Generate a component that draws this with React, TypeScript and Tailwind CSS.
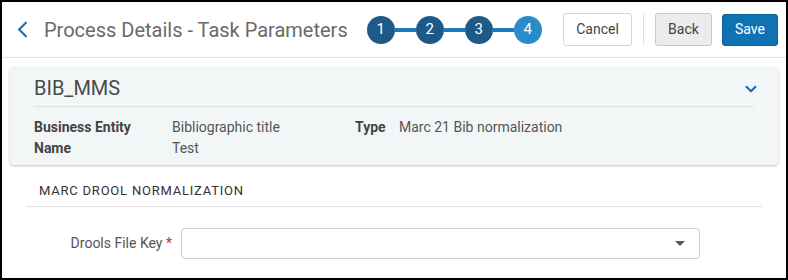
import { ChevronLeft, ChevronDown } from 'lucide-react';

const steps = [1, 2, 3, 4];

function Stepper() {
  return (
    <div className="flex items-center">
      {steps.map((s, i) => (
        <div key={s} className="flex items-center">
          {i > 0 && <div className="w-[21px] h-[4px] bg-[#1a78bb]" />}
          <div
            className={`w-[28px] h-[28px] rounded-full flex items-center justify-center text-white text-[15px] ${
              s === 4 ? 'bg-[#2b8ac8]' : 'bg-[#1d5a88]'
            }`}
          >
            {s}
          </div>
        </div>
      ))}
    </div>
  );
}

export default function App() {
  return (
    <main
      className="w-[788px] h-[280px] border-2 border-black bg-white overflow-hidden text-[#333]"
      style={{ fontFamily: 'Roboto, "Liberation Sans", sans-serif' }}
    >
      {/* header */}
      <header className="h-[56px] flex items-center border-b border-[#e0e0e0] pl-[7px] pr-[8px]">
        <ChevronLeft className="w-[27px] h-[27px] text-[#1a73b8]" strokeWidth={1.9} />
        <h1 className="ml-[8px] text-[20px] text-[#6a6a6a] leading-none">Process Details - Task Parameters</h1>
        <div className="ml-[19px]">
          <Stepper />
        </div>
        <div className="ml-auto flex items-center">
          <button className="h-[33px] w-[69px] border border-[#d4d4d4] rounded-[3px] bg-white text-[14px] text-[#444]">
            Cancel
          </button>
          <div className="w-px h-[33px] bg-[#e3e3e3] mx-[11px]" />
          <button className="h-[33px] w-[57px] border border-[#c9c9c9] rounded-[3px] bg-[#ececec] text-[14px] text-[#444]">
            Back
          </button>
          <button className="ml-[10px] h-[32px] w-[56px] border border-[#0d5f96] rounded-[3px] bg-[#0f72b3] text-[14px] text-white">
            Save
          </button>
        </div>
      </header>

      {/* summary card */}
      <section className="mx-[8px] mt-[9px] h-[98px] bg-[#f3f6f7] rounded-[4px] shadow-[0_1px_3px_rgba(0,0,0,0.25)] px-[24px]">
        <div className="h-[40px] flex items-center justify-between border-b border-[#dcdfe1]">
          <span className="text-[20px] text-[#4a4a4a] leading-none pt-[2px]">BIB_MMS</span>
          <ChevronDown className="w-[18px] h-[18px] text-[#1f5fbf] -mr-[6px] mt-[4px]" strokeWidth={2.6} />
        </div>
        <div className="pt-[10px] flex text-[14px] leading-[21px]">
          <div className="w-[138px] font-bold text-[#444]">
            <div>Business Entity</div>
            <div>Name</div>
          </div>
          <div className="w-[183px] text-[#555]">
            <div>Bibliographic title</div>
            <div>Test</div>
          </div>
          <div className="font-bold text-[#444] w-[44px]">Type</div>
          <div className="text-[#555]">Marc 21 Bib normalization</div>
        </div>
      </section>

      {/* section */}
      <div className="mx-[24px] mt-[13px] pb-[4px] border-b border-[#e3e3e3] pl-[13px]">
        <span className="text-[13px] tracking-[0.06em] text-[#333]">MARC DROOL NORMALIZATION</span>
      </div>

      <div className="mt-[21px] flex items-center">
        <label className="w-[179px] text-right text-[14px] text-[#555] pr-[9px]">
          Drools File Key <span className="text-[#e0261b]">*</span>
        </label>
        <div className="w-[519px] h-[31px] border border-[#cfcfcf] rounded-[4px] flex items-center justify-end pr-[14px]">
          <div className="w-0 h-0 border-l-[5px] border-r-[5px] border-t-[5px] border-l-transparent border-r-transparent border-t-[#555]" />
        </div>
      </div>
    </main>
  );
}
